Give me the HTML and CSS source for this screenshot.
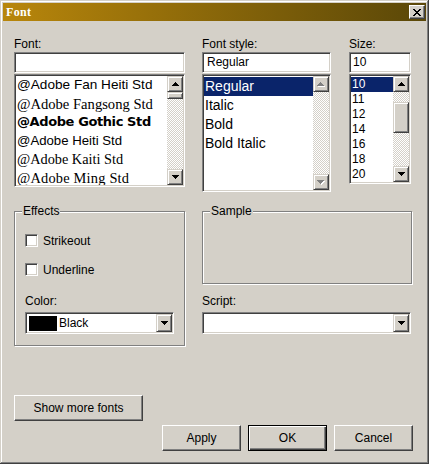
FILE: index.html
```html
<!DOCTYPE html>
<html>
<head>
<meta charset="utf-8">
<link rel="stylesheet" href="styles.css">
</head>
<body>
<div class="window">
  <div class="titlebar">
    <span class="title">Font</span>
    <div class="close">
      <svg width="8" height="7" viewBox="0 0 8 7" shape-rendering="crispEdges"><path d="M0 0h2v1h-2zM6 0h2v1h-2zM1 1h2v1h-2zM5 1h2v1h-2zM2 2h4v1h-4zM3 3h2v1h-2zM2 4h4v1h-4zM1 5h2v1h-2zM5 5h2v1h-2zM0 6h2v1h-2zM6 6h2v1h-2z" fill="#000"/></svg>
    </div>
  </div>
  <div class="content">
    <div class="top">
      <div class="col col-font">
        <div class="label">Font:</div>
        <div class="field"></div>
        <div class="list list-font">
          <div class="items">
            <div class="row f1">@Adobe Fan Heiti Std</div>
            <div class="row f2">@Adobe Fangsong Std</div>
            <div class="row f3">@Adobe Gothic Std</div>
            <div class="row f4">@Adobe Heiti Std</div>
            <div class="row f5">@Adobe Kaiti Std</div>
            <div class="row f6">@Adobe Ming Std</div>
          </div>
          <div class="vscroll">
            <div class="sbtn"><svg width="7" height="4" viewBox="0 0 7 4" shape-rendering="crispEdges"><path d="M3 0h1v1h-1zM2 1h3v1h-3zM1 2h5v1h-5zM0 3h7v1h-7z" fill="#000"/></svg></div>
            <div class="thumb thumb-font"></div>
            <div class="track"></div>
            <div class="sbtn"><svg width="7" height="4" viewBox="0 0 7 4" shape-rendering="crispEdges"><path d="M0 0h7v1h-7zM1 1h5v1h-5zM2 2h3v1h-3zM3 3h1v1h-1z" fill="#000"/></svg></div>
          </div>
        </div>
      </div>
      <div class="col col-style">
        <div class="label">Font style:</div>
        <div class="field">Regular</div>
        <div class="list list-style">
          <div class="items">
            <div class="row srow sel">Regular</div>
            <div class="row srow">Italic</div>
            <div class="row srow">Bold</div>
            <div class="row srow">Bold Italic</div>
          </div>
          <div class="vscroll">
            <div class="sbtn"><svg width="8" height="5" viewBox="0 0 8 5" shape-rendering="crispEdges"><path d="M4 1h1v1h-1zM3 2h3v1h-3zM2 3h5v1h-5zM1 4h7v1h-7z" fill="#fff"/><path d="M3 0h1v1h-1zM2 1h3v1h-3zM1 2h5v1h-5zM0 3h7v1h-7z" fill="#808080"/></svg></div>
            <div class="track"></div>
            <div class="sbtn"><svg width="8" height="5" viewBox="0 0 8 5" shape-rendering="crispEdges"><path d="M1 1h7v1h-7zM2 2h5v1h-5zM3 3h3v1h-3zM4 4h1v1h-1z" fill="#fff"/><path d="M0 0h7v1h-7zM1 1h5v1h-5zM2 2h3v1h-3zM3 3h1v1h-1z" fill="#808080"/></svg></div>
          </div>
        </div>
      </div>
      <div class="col col-size">
        <div class="label">Size:</div>
        <div class="field field-size">10</div>
        <div class="list list-size">
          <div class="items">
            <div class="row zrow sel">10</div>
            <div class="row zrow">11</div>
            <div class="row zrow">12</div>
            <div class="row zrow">14</div>
            <div class="row zrow">16</div>
            <div class="row zrow">18</div>
            <div class="row zrow">20</div>
          </div>
          <div class="vscroll">
            <div class="sbtn"><svg width="7" height="4" viewBox="0 0 7 4" shape-rendering="crispEdges"><path d="M3 0h1v1h-1zM2 1h3v1h-3zM1 2h5v1h-5zM0 3h7v1h-7z" fill="#000"/></svg></div>
            <div class="track track-small"></div>
            <div class="thumb thumb-size"></div>
            <div class="track"></div>
            <div class="sbtn"><svg width="7" height="4" viewBox="0 0 7 4" shape-rendering="crispEdges"><path d="M0 0h7v1h-7zM1 1h5v1h-5zM2 2h3v1h-3zM3 3h1v1h-1z" fill="#000"/></svg></div>
          </div>
        </div>
      </div>
    </div>

    <div class="mid">
      <div class="group effects">
        <span class="legend">Effects</span>
        <div class="check-row"><span class="checkbox"></span><span>Strikeout</span></div>
        <div class="check-row second"><span class="checkbox"></span><span>Underline</span></div>
        <div class="label label-color">Color:</div>
        <div class="combo combo-color">
          <span class="swatch"></span>
          <span class="combo-text">Black</span>
          <div class="dbtn"><svg width="7" height="4" viewBox="0 0 7 4" shape-rendering="crispEdges"><path d="M0 0h7v1h-7zM1 1h5v1h-5zM2 2h3v1h-3zM3 3h1v1h-1z" fill="#000"/></svg></div>
        </div>
      </div>
      <div class="col-sample">
        <div class="group sample"><span class="legend">Sample</span></div>
        <div class="label label-script">Script:</div>
        <div class="combo combo-script">
          <span class="combo-text"></span>
          <div class="dbtn"><svg width="7" height="4" viewBox="0 0 7 4" shape-rendering="crispEdges"><path d="M0 0h7v1h-7zM1 1h5v1h-5zM2 2h3v1h-3zM3 3h1v1h-1z" fill="#000"/></svg></div>
        </div>
      </div>
    </div>

    <div class="more"><div class="btn btn-more">Show more fonts</div></div>
    <div class="actions">
      <div class="btn">Apply</div>
      <div class="btn btn-default">OK</div>
      <div class="btn">Cancel</div>
    </div>
  </div>
</div>
</body>
</html>
```
FILE: styles.css
```css
html, body {
  margin: 0;
  padding: 0;
  background: #d4d0c8;
}
body {
  font-family: "Liberation Sans", Arial, sans-serif;
  font-size: 12px;
  color: #000;
}
.window {
  width: 429px;
  height: 464px;
  box-sizing: border-box;
  padding: 3px;
  background: #d4d0c8;
  box-shadow: inset -1px -1px #404040, inset 1px 1px #d4d0c8, inset -2px -2px #808080, inset 2px 2px #fff;
  display: flex;
  flex-direction: column;
}
.titlebar {
  height: 18px;
  flex: none;
  background: linear-gradient(to right, #b8860b, #5a4708);
  display: flex;
  align-items: center;
  justify-content: space-between;
  padding: 0 1px 0 3px;
}
.title {
  color: #fff;
  font: bold 12px "Liberation Serif", serif;
  letter-spacing: 0.3px;
}
.close {
  width: 16px;
  height: 14px;
  box-sizing: border-box;
  background: #d4d0c8;
  border: 1px solid;
  border-color: #fff #404040 #404040 #fff;
  box-shadow: inset -1px -1px #808080;
  display: flex;
  align-items: center;
  justify-content: center;
}
.close svg { display: block; margin-left: -1px; }

.content {
  flex: 1;
  padding: 15px 0 0 11px;
  display: flex;
  flex-direction: column;
}
.top { display: flex; }
.col-font { width: 171px; }
.col-style { width: 129px; margin-left: 17px; }
.col-size { width: 62px; margin-left: 18px; }
.label {
  height: 16px;
  line-height: 16px;
  white-space: nowrap;
}
.field {
  height: 21px;
  box-sizing: border-box;
  background: #fff;
  border: 1px solid;
  border-color: #808080 #fff #fff #808080;
  box-shadow: inset 1px 1px #404040, inset -1px -1px #d4d0c8;
  padding: 1px 4px;
  line-height: 17px;
}
.field-size { padding-left: 3px; }
.list {
  margin-top: 1px;
  box-sizing: border-box;
  background: #fff;
  border: 1px solid;
  border-color: #808080 #fff #fff #808080;
  box-shadow: inset 1px 1px #404040, inset -1px -1px #d4d0c8;
  padding: 1px;
  display: flex;
}
.list-font { height: 113px; }
.list-style { height: 118px; }
.list-size { height: 110px; }
.items {
  flex: 1;
  min-width: 0;
  overflow: hidden;
}
.list-style .items, .list-size .items { padding-top: 1px; }
.row {
  white-space: nowrap;
  padding-left: 1px;
}
.f1 { height: 18.5px; font: 13.6px/18.5px "Liberation Sans", sans-serif; }
.f2 { height: 18.5px; font: 14.6px/18.5px "Liberation Serif", serif; }
.f3 { height: 18.5px; font: bold 13px/18.5px "DejaVu Sans", sans-serif; letter-spacing: -0.4px; }
.f4 { height: 18.5px; font: 13.2px/18.5px "Liberation Sans", sans-serif; }
.f5 { height: 18.5px; font: 14.3px/18.5px "Liberation Serif", serif; }
.f6 { height: 18.5px; font: 14.4px/18.5px "Liberation Serif", serif; letter-spacing: 0.2px; }
.srow {
  height: 19px;
  line-height: 19px;
  font-size: 14px;
}
.zrow {
  height: 15px;
  line-height: 15px;
  font-size: 12px;
}
.sel { background: #0a246a; color: #fff; }

.vscroll {
  width: 16px;
  flex: none;
  display: flex;
  flex-direction: column;
}
.sbtn, .thumb, .dbtn {
  box-sizing: border-box;
  background: #d4d0c8;
  border: 1px solid;
  border-color: #d4d0c8 #404040 #404040 #d4d0c8;
  box-shadow: inset 1px 1px #fff, inset -1px -1px #808080;
}
.sbtn {
  height: 16px;
  flex: none;
  display: flex;
  align-items: center;
  justify-content: center;
}
.sbtn svg, .dbtn svg { display: block; }
.track {
  flex: 1;
  background-color: #fff;
  background-image: repeating-conic-gradient(#d4d0c8 0 25%, #fff 0 50%);
  background-size: 2px 2px;
}
.track-small { flex: none; height: 10px; }
.thumb { flex: none; }
.thumb-font { height: 7px; }
.thumb-size { height: 31px; }

.mid {
  display: flex;
  margin-top: 19px;
}
.group {
  position: relative;
  box-sizing: border-box;
  border: 1px solid #808080;
  box-shadow: inset 1px 1px #fff, 1px 1px #fff;
}
.legend {
  position: absolute;
  top: -9px;
  left: 7px;
  padding: 0 1px;
  line-height: 16px;
  background: #d4d0c8;
}
.effects {
  width: 171px;
  height: 135px;
  padding: 22px 0 0 10px;
}
.check-row {
  display: flex;
  align-items: center;
  height: 13px;
  gap: 5px;
}
.check-row.second { margin-top: 16px; }
.checkbox {
  width: 13px;
  height: 13px;
  box-sizing: border-box;
  background: #fff;
  border: 1px solid;
  border-color: #808080 #fff #fff #808080;
  box-shadow: inset 1px 1px #404040, inset -1px -1px #d4d0c8;
}
.label-color { margin-top: 17px; }
.combo {
  margin-top: 3px;
  height: 22px;
  box-sizing: border-box;
  background: #fff;
  border: 1px solid;
  border-color: #808080 #fff #fff #808080;
  box-shadow: inset 1px 1px #404040, inset -1px -1px #d4d0c8;
  padding: 1px;
  display: flex;
  align-items: center;
}
.combo-color { width: 149px; }
.combo-script { width: 209px; }
.swatch {
  width: 28px;
  height: 15px;
  margin-left: 2px;
  background: #000;
  flex: none;
}
.combo-text {
  flex: 1;
  padding-left: 2px;
  line-height: 18px;
}
.dbtn {
  width: 16px;
  height: 18px;
  flex: none;
  display: flex;
  align-items: center;
  justify-content: center;
}
.col-sample {
  width: 210px;
  margin-left: 17px;
}
.sample { height: 73px; }
.label-script { margin-top: 9px; }

.more { margin-top: 49px; display: flex; }
.btn {
  width: 79px;
  height: 26px;
  box-sizing: border-box;
  background: #d4d0c8;
  border: 1px solid;
  border-color: #fff #404040 #404040 #fff;
  box-shadow: inset -1px -1px #808080;
  display: flex;
  align-items: center;
  justify-content: center;
  white-space: nowrap;
}
.btn-more { width: 129px; }
.btn-default {
  border-color: #000;
  box-shadow: inset 1px 1px #fff, inset -1px -1px #404040, inset -2px -2px #808080;
}
.actions {
  margin-top: 4px;
  display: flex;
  justify-content: flex-end;
  gap: 7px;
  padding-right: 13px;
}
```
